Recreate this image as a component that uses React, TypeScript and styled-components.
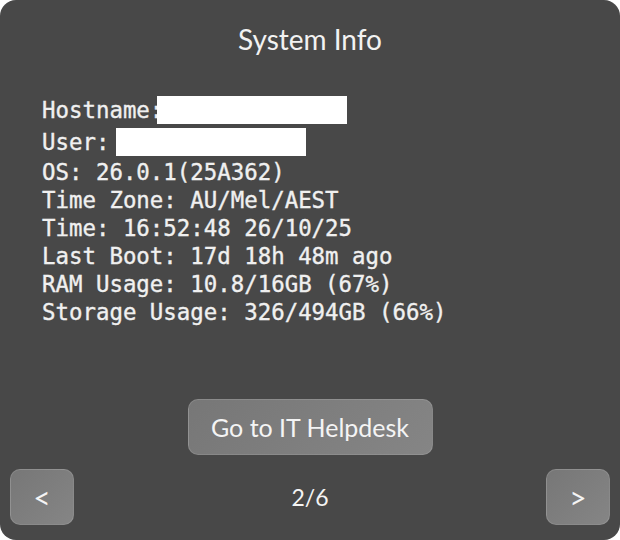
import React from "react";
import styled, { createGlobalStyle } from "styled-components";

const Global = createGlobalStyle`
  html, body { margin: 0; padding: 0; background: #ffffff; }
  body { font-family: "Lato", "Noto Sans", sans-serif; }
`;

const Panel = styled.div`
  width: 620px;
  height: 540px;
  box-sizing: border-box;
  background: #484848;
  border-radius: 16px;
  display: flex;
  flex-direction: column;
  color: #f2f2f2;
  overflow: hidden;
`;

const Title = styled.h1`
  margin: 22px 0 0;
  font-family: "Lato", "Noto Sans", sans-serif;
  font-weight: 400;
  font-size: 28px;
  line-height: 34px;
  text-align: center;
  color: #f2f2f2;
`;

const InfoList = styled.div`
  margin: 38px 0 0 42px;
  font-family: "DejaVu Sans Mono", "Liberation Mono", monospace;
  font-size: 22.4px;
  line-height: 28px;
  color: #f0f0f0;
  white-space: pre;
  -webkit-text-stroke: 0.35px #f0f0f0;
`;

const Line = styled.div<{ $tight?: boolean }>`
  height: ${(p) => (p.$tight ? 32 : 28)}px;
  display: flex;
  align-items: center;
`;

const Redact = styled.span<{ $shift: number }>`
  display: inline-block;
  width: 190px;
  height: 28px;
  background: #ffffff;
  margin-left: ${(p) => p.$shift}px;
`;

const Spacer = styled.div`
  flex: 1;
`;

const ActionRow = styled.div`
  display: flex;
  justify-content: center;
`;

const GrayButton = styled.button<{ $w: number; $size?: number }>`
  width: ${(p) => p.$w}px;
  height: 56px;
  box-sizing: border-box;
  border-radius: 10px;
  border: 1px solid rgba(255, 255, 255, 0.12);
  background: linear-gradient(135deg, #777777 0%, #858585 100%);
  color: #f4f4f4;
  font-family: "Lato", "Noto Sans", sans-serif;
  font-size: ${(p) => p.$size ?? 25}px;
  font-weight: 400;
  padding: 0;
  display: flex;
  align-items: center;
  justify-content: center;
`;

const NavRow = styled.div`
  display: flex;
  align-items: center;
  justify-content: space-between;
  padding: 14px 10px 15px;
`;

const PageLabel = styled.div`
  font-family: "Lato", "Noto Sans", sans-serif;
  font-size: 23px;
  color: #f4f4f4;
`;

export default function App() {
  return (
    <>
      <Global />
      <Panel>
        <Title>System Info</Title>
        <InfoList>
          <Line $tight>
            Hostname:<Redact $shift={-6} />
          </Line>
          <Line $tight>
            User: <Redact $shift={-7} />
          </Line>
          <Line>OS: 26.0.1(25A362)</Line>
          <Line>Time Zone: AU/Mel/AEST</Line>
          <Line>Time: 16:52:48 26/10/25</Line>
          <Line>Last Boot: 17d 18h 48m ago</Line>
          <Line>RAM Usage: 10.8/16GB (67%)</Line>
          <Line>Storage Usage: 326/494GB (66%)</Line>
        </InfoList>
        <Spacer />
        <ActionRow>
          <GrayButton $w={245}>Go to IT Helpdesk</GrayButton>
        </ActionRow>
        <NavRow>
          <GrayButton $w={64} $size={30}>&lt;</GrayButton>
          <PageLabel>2/6</PageLabel>
          <GrayButton $w={64} $size={30}>&gt;</GrayButton>
        </NavRow>
      </Panel>
    </>
  );
}
